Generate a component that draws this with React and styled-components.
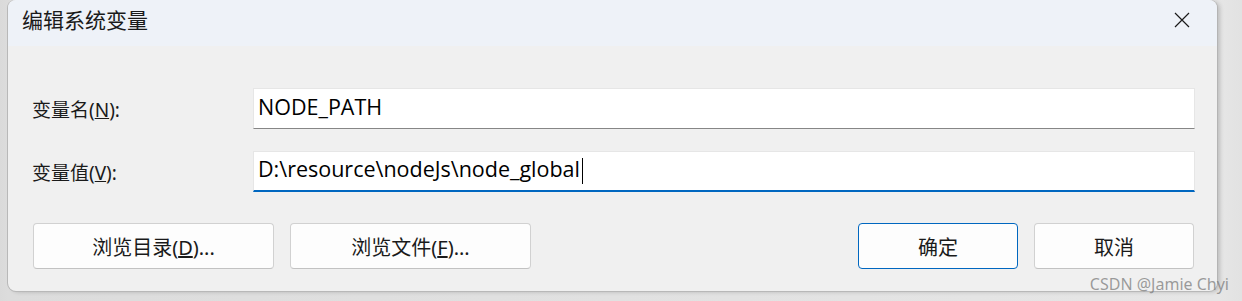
import React from 'react';
import styled, { createGlobalStyle } from 'styled-components';

const GlobalStyle = createGlobalStyle`
  html, body {
    margin: 0;
    padding: 0;
    background: #e4e4e4;
  }
  body {
    font-family: "Segoe UI", "Noto Sans", "Noto Sans CJK SC", sans-serif;
  }
`;

const Desktop = styled.div`
  position: relative;
  width: 1242px;
  height: 301px;
  overflow: hidden;
  background: linear-gradient(90deg, #dadada 0, #dcdcdc 8px, #e6e6e6 1218px, #e2e2e2 1242px);
`;

const Dialog = styled.div`
  width: 1209px;
  height: 291px;
  margin-left: 8px;
  background: #f0f0f0;
  border-radius: 8px;
  box-shadow: -1px 0 0 #b8b8b8, 1px 0 0 #b4b4b4, 0 1px 0 #b8b8b8, 3px 1px 4px rgba(0, 0, 0, 0.18);
  overflow: hidden;
  display: flex;
  flex-direction: column;
`;

const TitleBar = styled.div`
  height: 46px;
  flex: none;
  background: #eef2f8;
  display: flex;
  align-items: center;
  justify-content: space-between;
  padding: 0 20px 0 14px;
`;

const Title = styled.div`
  font-family: "Noto Sans CJK SC", sans-serif;
  font-size: 21px;
  color: #1a1a1a;
  margin-top: -8px;
`;

const CloseButton = styled.button`
  width: 30px;
  height: 30px;
  border: none;
  background: transparent;
  padding: 0;
  display: flex;
  align-items: center;
  justify-content: center;
  margin-top: -6px;
`;

const Body = styled.div`
  padding: 42px 22px 0 24px;
  display: flex;
  flex-direction: column;
`;

const Field = styled.div`
  display: flex;
  align-items: center;
  height: 41px;
  & + & {
    margin-top: 22px;
  }
`;

const Label = styled.div`
  width: 221px;
  flex: none;
  font-family: "Segoe UI", "Noto Sans", "Noto Sans CJK SC", sans-serif;
  font-size: 19px;
  color: #1a1a1a;
  padding-top: 1px;
`;

const Input = styled.div`
  flex: 1;
  height: 100%;
  box-sizing: border-box;
  background: #ffffff;
  border: 1px solid #e6e6e6;
  border-bottom: ${p => (p.$focused ? '2px solid #0067c0' : '1px solid #868686')};
  padding: 0 0 5px 4px;
  display: flex;
  align-items: center;
  font-family: "Segoe UI", "Open Sans", "Noto Sans", sans-serif;
  font-size: 21.5px;
  color: #000;
  white-space: pre;
`;

const Caret = styled.span`
  display: inline-block;
  width: 0;
  height: 26px;
  border-left: 1.5px solid #000;
  margin-left: 2px;
  margin-top: 4px;
`;

const ButtonRow = styled.div`
  display: flex;
  align-items: center;
  margin-top: 31px;
  padding-left: 1px;
  padding-right: 1px;
  gap: 16px;
`;

const Spacer = styled.div`
  flex: 1;
`;

const Button = styled.button`
  width: ${p => p.$width}px;
  height: 46px;
  box-sizing: border-box;
  border-radius: 4px;
  background: #fdfdfd;
  border: 1px solid ${p => (p.$primary ? '#0067c0' : '#d1d1d1')};
  border-bottom-color: ${p => (p.$primary ? '#0067c0' : '#c2c2c2')};
  font-family: "Segoe UI", "Noto Sans", "Noto Sans CJK SC", sans-serif;
  font-size: 20px;
  color: #1a1a1a;
  padding: 0;
`;

const Watermark = styled.div`
  position: absolute;
  right: 13px;
  bottom: 6px;
  font-family: "Noto Sans", "Liberation Sans", sans-serif;
  font-size: 16px;
  color: rgba(125, 125, 125, 0.75);
`;

const CloseIcon = () => (
  <svg width="16" height="16" viewBox="0 0 16 16">
    <path d="M1 1 L15 15 M15 1 L1 15" stroke="#1a1a1a" strokeWidth="1.2" fill="none" />
  </svg>
);

export default function App() {
  return (
    <>
      <GlobalStyle />
      <Desktop>
        <Dialog>
          <TitleBar>
            <Title>编辑系统变量</Title>
            <CloseButton aria-label="关闭">
              <CloseIcon />
            </CloseButton>
          </TitleBar>
          <Body>
            <Field>
              <Label>变量名(<u>N</u>):</Label>
              <Input>NODE_PATH</Input>
            </Field>
            <Field>
              <Label>变量值(<u>V</u>):</Label>
              <Input $focused>
                D:\resource\nodeJs\node_global
                <Caret />
              </Input>
            </Field>
            <ButtonRow>
              <Button $width={241}>浏览目录(<u>D</u>)...</Button>
              <Button $width={241}>浏览文件(<u>F</u>)...</Button>
              <Spacer />
              <Button $width={160} $primary>确定</Button>
              <Button $width={160}>取消</Button>
            </ButtonRow>
          </Body>
        </Dialog>
        <Watermark>CSDN @Jamie Chyi</Watermark>
      </Desktop>
    </>
  );
}
